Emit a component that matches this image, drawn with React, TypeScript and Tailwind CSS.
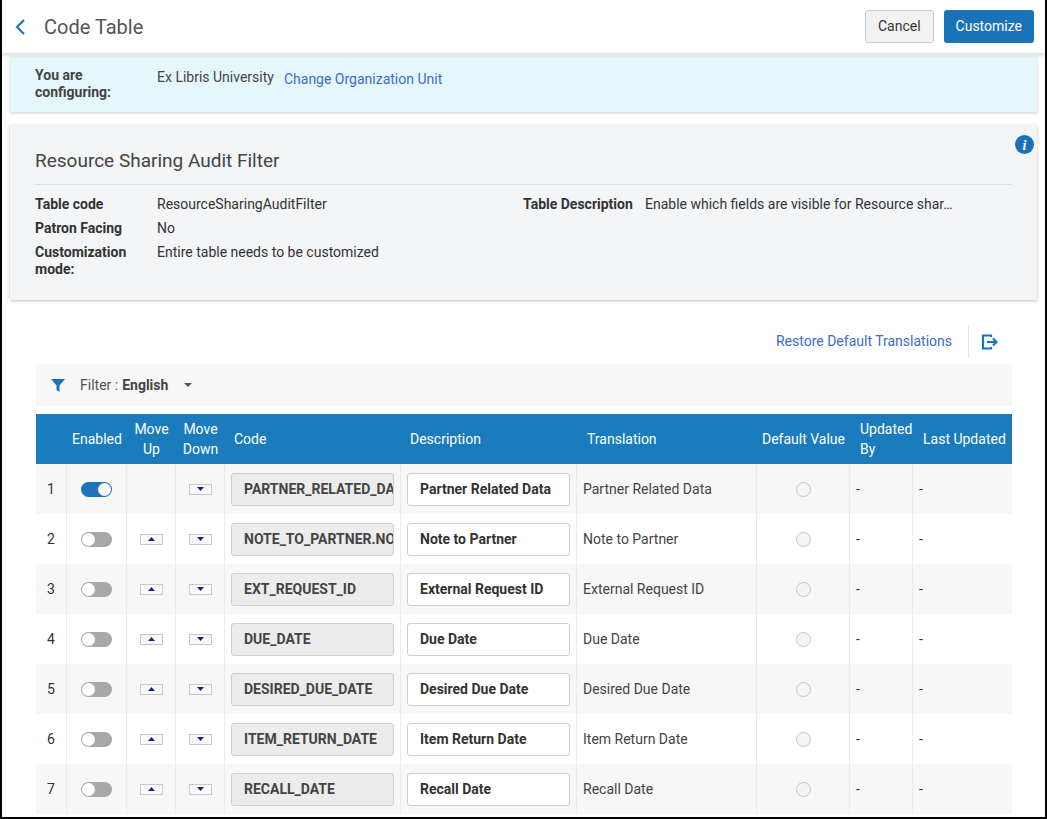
import React from "react";

const rows = [
  { code: "PARTNER_RELATED_DATA", desc: "Partner Related Data", on: true },
  { code: "NOTE_TO_PARTNER.NOTE", desc: "Note to Partner" },
  { code: "EXT_REQUEST_ID", desc: "External Request ID" },
  { code: "DUE_DATE", desc: "Due Date" },
  { code: "DESIRED_DUE_DATE", desc: "Desired Due Date" },
  { code: "ITEM_RETURN_DATE", desc: "Item Return Date" },
  { code: "RECALL_DATE", desc: "Recall Date" },
];

function Arrow({ up }: { up?: boolean }) {
  return (
    <div className="mx-auto flex h-[11px] w-[23px] items-center justify-center border border-[#c8c8c8] bg-[#f8f8f8]">
      <svg width="7" height="4" viewBox="0 0 7 4">
        <path d={up ? "M0 4L3.5 0L7 4Z" : "M0 0L3.5 4L7 0Z"} fill="#1a237e" />
      </svg>
    </div>
  );
}

function Toggle({ on }: { on?: boolean }) {
  return (
    <div className={`relative mx-auto h-[15px] w-[31px] rounded-full ${on ? "bg-[#1e73be]" : "bg-[#a8a8a8]"}`}>
      <div className={`absolute top-[1px] h-[13px] w-[13px] rounded-full bg-white ${on ? "right-[1px]" : "left-[1px]"}`} />
    </div>
  );
}

export default function App() {
  const cols = "grid grid-cols-[31px_60px_49px_49px_176px_176px_180px_93px_63px_97px]";
  return (
    <div className="h-[819px] w-[1047px] overflow-hidden border-2 border-t-0 border-black bg-white font-[Roboto,sans-serif] text-[#333]">
      <div className="relative z-10 flex h-[53px] items-center bg-white pl-[12px] pr-[11px] shadow-[0_2px_4px_rgba(0,0,0,0.15)]">
        <svg width="14" height="18" viewBox="0 0 14 18" className="mr-[16px]">
          <path d="M10 2L3 9l7 7" stroke="#1e73be" strokeWidth="2.2" fill="none" />
        </svg>
        <div className="text-[20px] text-[#555]">Code Table</div>
        <div className="ml-auto flex gap-[10px]">
          <button className="h-[33px] rounded-[3px] border border-[#ccc] bg-[#f2f2f2] px-[12px] text-[14px] text-[#333]">Cancel</button>
          <button className="h-[33px] rounded-[3px] bg-[#1a73b8] px-[12px] text-[14px] text-white">Customize</button>
        </div>
      </div>
      <div className="mx-[8px] mt-[3px] flex h-[56px] bg-[#e6f7fc] px-[25px] pt-[11px] text-[14px] shadow-[0_1px_3px_rgba(0,0,0,0.2)]">
        <div className="w-[122px] font-bold leading-[17px] text-[#444]">You are<br />configuring:</div>
        <div className="text-[#444]">Ex Libris University</div>
        <div className="ml-[10px] pt-[2px] text-[#3a6ccf]">Change Organization Unit</div>
      </div>
      <div className="relative mx-[8px] mt-[13px] h-[175px] bg-[#f3f5f6] px-[25px] pt-[22px] text-[14px] shadow-[0_1px_3px_rgba(0,0,0,0.25)]">
        <svg width="19" height="19" viewBox="0 0 19 19" className="absolute right-[3px] top-[10px]">
          <circle cx="9.5" cy="9.5" r="9.5" fill="#1a73b8" />
          <text x="9.5" y="15" textAnchor="middle" fontSize="14" fontWeight="bold" fontStyle="italic" fill="white" fontFamily="Liberation Serif, serif">i</text>
        </svg>
        <div className="border-b border-[#dde] pb-[8px] text-[19px] text-[#444]">Resource Sharing Audit Filter</div>
        <div className="mt-[11px] flex leading-[17px]">
          <div className="w-[488px] space-y-[7px]">
            <div className="flex"><div className="w-[122px] font-bold">Table code</div><div>ResourceSharingAuditFilter</div></div>
            <div className="flex"><div className="w-[122px] font-bold">Patron Facing</div><div>No</div></div>
            <div className="flex"><div className="w-[122px] font-bold">Customization<br />mode:</div><div>Entire table needs to be customized</div></div>
          </div>
          <div className="flex"><div className="w-[122px] font-bold">Table Description</div><div>Enable which fields are visible for Resource shar…</div></div>
        </div>
      </div>
      <div className="mx-[34px] mt-[25px] flex h-[33px] items-center justify-end text-[14px]">
        <span className="text-[#3a6ccf]">Restore Default Translations</span>
        <div className="ml-[16px] h-[33px] border-l border-[#e4e4e4]" />
        <svg width="18" height="16" viewBox="0 0 18 16" className="ml-[12px] mr-[12px]">
          <path d="M10 3V1.5H2v13h8V13" stroke="#1a73b8" strokeWidth="2.2" fill="none" />
          <path d="M6 8h8M12 4.5L15.5 8L12 11.5" stroke="#1a73b8" strokeWidth="2.2" fill="none" />
        </svg>
      </div>
      <div className="ml-[34px] w-[976px]">
        <div className="mt-[6px] flex h-[42px] items-center bg-[#f7f7f7] pl-[15px] text-[14px]">
          <svg width="14" height="13" viewBox="0 0 14 13"><path d="M0 0h14L8.5 6.5V13L5.5 11V6.5Z" fill="#1a73b8" /></svg>
          <span className="ml-[15px] text-[#555]">Filter :</span>
          <span className="ml-[4px] font-bold text-[#444]">English</span>
          <svg width="8" height="4" viewBox="0 0 8 4" className="ml-[16px]"><path d="M0 0h8L4 4Z" fill="#555" /></svg>
        </div>
        <div className={`${cols} mt-[8px] h-[50px] items-center bg-[#1a7bbd] text-[14px] leading-[20px] text-white`}>
          <div />
          <div className="text-center">Enabled</div>
          <div className="text-center">Move<br />Up</div>
          <div className="text-center">Move<br />Down</div>
          <div className="pl-[9px]">Code</div>
          <div className="pl-[9px]">Description</div>
          <div className="pl-[10px]">Translation</div>
          <div className="text-center">Default Value</div>
          <div className="pl-[10px]">Updated<br />By</div>
          <div className="whitespace-nowrap pl-[10px]">Last Updated</div>
        </div>
        {rows.map((r, i) => (
          <div key={r.code} className={`${cols} h-[50px] text-[14px] ${i % 2 === 0 ? "bg-[#f7f7f7]" : "bg-white"}`}>
            <div className="flex items-center justify-center border-r border-[#ebebeb]">{i + 1}</div>
            <div className="flex items-center border-r border-[#ebebeb]"><Toggle on={r.on} /></div>
            <div className="flex items-center border-r border-[#ebebeb]">{i > 0 && <Arrow up />}</div>
            <div className="flex items-center border-r border-[#ebebeb]"><Arrow /></div>
            <div className="flex items-center border-r border-[#ebebeb] px-[6px]">
              <div className="flex h-[33px] w-full items-center overflow-hidden whitespace-nowrap rounded-[3px] border border-[#cfcfcf] bg-[#ececec] px-[12px] font-bold text-[#444]">{r.code}</div>
            </div>
            <div className="flex items-center border-r border-[#ebebeb] px-[6px]">
              <div className="flex h-[33px] w-full items-center overflow-hidden whitespace-nowrap rounded-[3px] border border-[#cfcfcf] bg-white px-[12px] font-bold text-[#333]">{r.desc}</div>
            </div>
            <div className="flex items-center border-r border-[#ebebeb] pl-[6px] text-[#444]">{r.desc}</div>
            <div className="flex items-center justify-center border-r border-[#ebebeb]">
              <div className="h-[15px] w-[15px] rounded-full border border-[#c4c4c4] bg-[#f4f4f4]" />
            </div>
            <div className="flex items-center border-r border-[#ebebeb] pl-[6px]">-</div>
            <div className="flex items-center pl-[6px]">-</div>
          </div>
        ))}
      </div>
    </div>
  );
}
